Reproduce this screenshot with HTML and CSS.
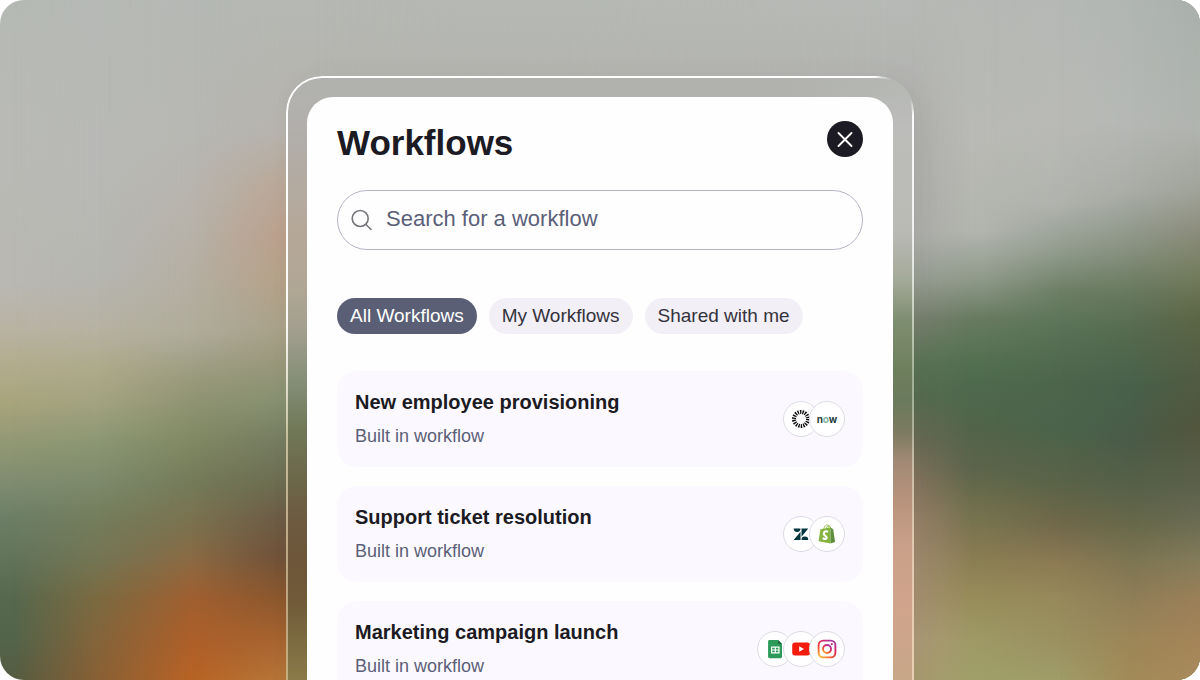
FILE: index.html
```html
<!DOCTYPE html>
<html lang="en">
<head>
<meta charset="utf-8">
<meta name="viewport" content="width=device-width, initial-scale=1">
<title>Workflows</title>
<link rel="stylesheet" href="styles.css">
</head>
<body>
<main class="scene">
  <div class="backdrop" aria-hidden="true">
    <div class="wash wash-a"></div>
    <div class="wash wash-b"></div>
    <div class="wash wash-c"></div>
    <div class="wash wash-d"></div>
    <div class="wash wash-e"></div>
    <div class="wash wash-f"></div>
    <div class="wash wash-g"></div>
    <div class="wash wash-h"></div>
    <div class="wash wash-i"></div>
  </div>
  <section class="frame" aria-labelledby="title">
    <div class="rim" aria-hidden="true"></div>
    <div class="panel">
      <header class="panel-head">
        <h1 class="title" id="title">Workflows</h1>
        <button class="close" type="button" aria-label="Close">
          <svg viewBox="0 0 36 36" width="36" height="36" fill="none" stroke="#fff" stroke-width="1.9" stroke-linecap="round"><path d="M11.500 12l13 13M24.500 12l-13 13"/></svg>
        </button>
      </header>
      <label class="search">
        <svg viewBox="0 0 22 22" width="22" height="22" fill="none" stroke="#75757a" stroke-width="1.6" stroke-linecap="round" aria-hidden="true"><circle cx="9.200" cy="9.500" r="8"/><path d="M15 15.500l5 5"/></svg>
        <input class="search-input" type="search" placeholder="Search for a workflow" aria-label="Search for a workflow">
      </label>
      <nav class="tabs" aria-label="Workflow filters">
        <button class="tab tab-active" type="button" aria-pressed="true">All Workflows</button>
        <button class="tab" type="button" aria-pressed="false">My Workflows</button>
        <button class="tab" type="button" aria-pressed="false">Shared with me</button>
      </nav>
      <ul class="list">
        <li class="item">
          <div class="item-text">
            <h2 class="item-title">New employee provisioning</h2>
            <p class="item-note">Built in workflow</p>
          </div>
          <div class="apps">
            <span class="app"><svg viewBox="0 0 20 20" width="20" height="20"><circle cx="10" cy="10" r="7" fill="none" stroke="#111" stroke-width="4" stroke-dasharray="1.400 1.043"/></svg></span>
            <span class="app"><span class="now">n<span class="now-o">o</span>w</span></span>
          </div>
        </li>
        <li class="item">
          <div class="item-text">
            <h2 class="item-title">Support ticket resolution</h2>
            <p class="item-note">Built in workflow</p>
          </div>
          <div class="apps">
            <span class="app"><svg viewBox="0 0 20 20" width="20" height="20" fill="#03363d"><path d="M9.500 7.800V16H2.700zM9.500 4.500a3.400 3.400 0 0 1-6.800 0zM10.500 16a3.400 3.400 0 0 1 6.800 0zM10.500 12.700V4.500h6.800z"/></svg></span>
            <span class="app"><svg viewBox="0 0 20 22" width="20" height="22"><path d="M6.500 7C7 3.500 9 1.500 10.500 2s1.500 2.500 1.500 4.500M9 6.500c.5-3 2-4 3.300-3.500s1.300 1.800 1.400 3" fill="none" stroke="#95bf47" stroke-width="1"/><path d="M3.400 6.200L13.500 4.500V20.500L1.600 18.300z" fill="#86b440"/><path d="M13.500 4.500l2.700 1.700 1.900 12.800-4.600 1.500z" fill="#5e8e3e"/><path d="M11 8.800C8.900 7.600 6.800 8.700 6.800 10.700c0 2.200 2.800 2.200 2.800 4 0 1.600-2 1.700-3.900.4" fill="none" stroke="#fff" stroke-width="2.100"/></svg></span>
          </div>
        </li>
        <li class="item">
          <div class="item-text">
            <h2 class="item-title">Marketing campaign launch</h2>
            <p class="item-note">Built in workflow</p>
          </div>
          <div class="apps">
            <span class="app"><svg viewBox="0 0 20 22" width="20" height="22"><path d="M4.500 2H13l4 4v12.800q0 1.400-1.400 1.400H4.500Q3.100 20.200 3.100 18.800V3.400Q3.100 2 4.500 2z" fill="#2c9a58"/><path d="M13 2l4 4h-4z" fill="#17693a"/><path d="M6 8.500h8.600v7H6z" fill="#fff"/><path d="M7.200 9.700h2.500v1.700H7.200zM10.900 9.700h2.500v1.700h-2.500zM7.200 12.600h2.500v1.700H7.200zM10.900 12.600h2.500v1.700h-2.500z" fill="#2c9a58"/></svg></span>
            <span class="app"><svg viewBox="0 0 20 20" width="20" height="20"><rect x="1.200" y="3.500" width="18" height="13" rx="3" fill="#f61c0d"/><path d="M8.200 7.200v5.600l4.800-2.800z" fill="#fff"/></svg></span>
            <span class="app"><svg viewBox="0 0 20 20" width="20" height="20"><defs><linearGradient id="insta" x1="0.100" y1="1" x2="0.800" y2="0"><stop offset="0" stop-color="#fdbb3a"/><stop offset=".32" stop-color="#f4552f"/><stop offset=".65" stop-color="#d92a5b"/><stop offset="1" stop-color="#a535a8"/></linearGradient></defs><g fill="none" stroke="url(#insta)" stroke-width="1.900"><rect x="1.600" y="1.600" width="16.800" height="16.800" rx="4.600"/><circle cx="10" cy="10" r="4"/></g><circle cx="14.800" cy="5.200" r="1.100" fill="#c02f86"/></svg></span>
          </div>
        </li>
      </ul>
    </div>
  </section>
</main>
</body>
</html>
```
FILE: styles.css
```css
* {
  box-sizing: border-box;
}

body {
  margin: 0;
  background: #fff;
  font-family: "Liberation Sans", Arial, sans-serif;
  color: #1c1a22;
}

.scene {
  position: relative;
  height: 100vh;
  padding: 76px 24px 0;
  overflow: hidden;
  border-radius: 24px;
}

/* Backdrop: vertical colour ramps, each fading in over the one before it. */
.backdrop,
.wash {
  position: absolute;
  inset: 0;
}

.wash-a {
  background: linear-gradient(#b5b9b4 0%, #b9bab6 18%, #b9b8b3 41%, #b9b3a4 48%, #b3ad90 53%, #a8a57c 59%, #929874 65%, #7f8c70 71%, #6c7f66 76%, #62745a 82%, #56684d 88%, #52644a 94%, #555c42 100%);
}

.wash-b {
  background: linear-gradient(#b6b9b5 0%, #b8b9b6 24%, #b6b6b1 40%, #b6b2a3 48%, #aeaa8b 54%, #a3a381 59%, #8c9673 65%, #7c8a6b 71%, #747d5c 76%, #747554 82%, #7c6a40 88%, #85643a 94%, #8a6034 100%);
  mask-image: linear-gradient(to right, transparent 1%, #000 8.3%);
}

.wash-c {
  background: linear-gradient(#b5b8b4 0%, #b7b7b3 20%, #b8b4ad 29%, #b5afa3 40%, #afac9a 49%, #98997b 56%, #828a65 64%, #747a59 71%, #7d704c 78%, #8a6a44 82%, #a05f30 88%, #ad5f29 94%, #b86325 100%);
  mask-image: linear-gradient(to right, transparent 8.3%, #000 16%);
}

.wash-d {
  background: linear-gradient(#b5b8b3 0%, #b6b3ae 19%, #b9a898 27%, #bb9f8b 35%, #b5a188 41%, #a9a189 48%, #969679 54%, #869070 59%, #747b60 65%, #6c6c50 71%, #6c5b46 76%, #6f5138 82%, #8b572d 88%, #a56330 94%, #b57638 100%);
  mask-image: linear-gradient(to right, transparent 16%, #000 23.5%);
}

.wash-e {
  background: linear-gradient(#b6b9b5 0%, #b3b4b1 12%, #aeaeac 20%, #abaca8 35%, #989d93 41%, #788070 47%, #587154 54%, #586b50 59%, #6b6a54 65%, #85745f 71%, #977f69 76%, #a08a6f 82%, #a68f72 88%, #ac9878 94%, #a99a70 100%);
  mask-image: linear-gradient(to right, transparent 26%, #000 74%);
}

.wash-f {
  background: linear-gradient(#b5b8b4 0%, #b9bab5 20%, #b2b4ae 34%, #8f9a8a 41%, #677a60 47%, #537050 53%, #4d694e 57%, #51644a 63%, #5c644a 69%, #71704d 75%, #867a52 81%, #958a58 87%, #9e9965 94%, #a09f69 100%);
  mask-image: linear-gradient(to right, transparent 76%, #000 81%);
}

.wash-g {
  background: linear-gradient(#b5b8b5 0%, #b9bab6 18%, #b0b3ad 30%, #909b8c 37%, #6c7e65 43%, #577156 49%, #4c664c 56%, #4b634b 63%, #5a6347 71%, #70684a 77%, #8d7b54 83%, #96895a 88%, #9a9060 94%, #9f9c68 100%);
  mask-image: linear-gradient(to right, transparent 82%, #000 88.3%);
}

.wash-h {
  background: linear-gradient(#b1b6b2 0%, #b5b8b4 18%, #aaada7 28%, #8a9383 36%, #67795e 43%, #556a4f 49%, #48604a 57%, #4a5b48 65%, #556048 71%, #67684a 77%, #7f7652 83%, #927f59 89%, #9c8657 94%, #a28a58 100%);
  mask-image: linear-gradient(to right, transparent 88.3%, #000 94.2%);
}

.wash-i {
  background: linear-gradient(#a9b1ac 0%, #b0b3af 19%, #a0a398 28%, #8b8c7c 34%, #757d5e 40%, #5b6545 47%, #505b42 56%, #52553c 63%, #5b604a 71%, #6b6c53 77%, #867c5a 83%, #9a7f58 88%, #a48458 94%, #a98a5c 100%);
  mask-image: linear-gradient(to right, transparent 94.2%, #000 100%);
}

/* Glass frame around the panel */
.frame {
  position: relative;
  max-width: 628px;
  margin: 0 auto;
  padding: 21px 21px 0;
  border-radius: 36px 36px 0 0;
  background:
    linear-gradient(to right, #b1b2ae 80%, rgba(177, 178, 174, 0)) top / 100% 21px no-repeat,
    linear-gradient(#b4b5b1 0, #b1aeab 54px, #b5a797 164px, #b0a694 214px, #a29f8e 254px, #858f78 304px, #707858 354px, #6c6a4c 394px, #6d5a40 444px, #6d5639 484px, #705a38 524px, #7c6a40 564px, #8a7a48 604px) left / 50% 100% no-repeat,
    linear-gradient(#b5b8b4 0, #bcbcba 54px, #babab5 154px, #a4aa9a 204px, #7e8e70 244px, #6e7f5e 294px, #6a7a5c 324px, #7c7a60 356px, #a08975 384px, #b8937c 424px, #c89f88 464px, #d0a48c 524px, #c8a688 604px) right / 50% 100% no-repeat;
  box-shadow: 6px 0 24px rgba(70, 70, 60, 0.05);
}

.rim {
  position: absolute;
  inset: 0;
  pointer-events: none;
  mask-image: radial-gradient(circle at calc(100% - 12px) 12px, transparent 14px, #000 30px);
}

.rim::before {
  content: "";
  position: absolute;
  inset: 0;
  padding: 2px;
  border-radius: 36px 36px 0 0;
  background:
    linear-gradient(#fff 0, rgba(255, 255, 255, 0.95) 240px, rgba(255, 240, 205, 0.6) 360px, rgba(255, 225, 180, 0.5) 604px) left / 50% 100% no-repeat,
    linear-gradient(#fff 0, rgba(255, 255, 255, 0.8) 150px, rgba(225, 240, 220, 0.45) 300px, rgba(255, 235, 205, 0.6) 604px) right / 50% 100% no-repeat;
  mask: linear-gradient(#000 0 0) content-box exclude, linear-gradient(#000 0 0);
}

.panel {
  display: flex;
  flex-direction: column;
  padding: 24px 30px 30px;
  border-radius: 26px 26px 0 0;
  background: #fefefe;
}

.panel-head {
  display: flex;
  align-items: flex-start;
  justify-content: space-between;
}

.title {
  margin: 0;
  font-size: 35px;
  font-weight: 700;
  line-height: 44px;
}

.close {
  display: flex;
  padding: 0;
  border: 0;
  border-radius: 50%;
  background: #1c1a22;
}

.search {
  display: flex;
  align-items: center;
  gap: 13px;
  height: 60px;
  margin-top: 25px;
  padding: 0 13px;
  border: 1px solid #b5b4c8;
  border-radius: 30px;
}

.search-input {
  flex: 1;
  min-width: 0;
  padding: 0 0 2px;
  border: 0;
  outline: 0;
  background: none;
  font: inherit;
  font-size: 22px;
  color: #1c1a22;
}

.search-input::placeholder {
  color: #5b5f78;
  opacity: 1;
}

.tabs {
  display: flex;
  flex-wrap: wrap;
  gap: 12px;
  margin-top: 48px;
}

.tab {
  height: 36px;
  padding: 0 13px;
  border: 0;
  border-radius: 18px;
  background: #f2eff7;
  font: inherit;
  font-size: 19px;
  color: #35333b;
}

.tab-active {
  background: #5a5f76;
  color: #fff;
}

.list {
  display: flex;
  flex-direction: column;
  gap: 19px;
  margin: 37px 0 0;
  padding: 0;
  list-style: none;
}

.item {
  display: flex;
  align-items: center;
  justify-content: space-between;
  padding: 18px;
  border-radius: 20px;
  background: #fbf9ff;
}

.item-title {
  margin: 0;
  font-size: 20px;
  font-weight: 700;
  line-height: 26px;
}

.item-note {
  margin: 8px 0 0;
  font-size: 18px;
  line-height: 26px;
  color: #5b5f78;
}

.apps {
  display: flex;
}

.app {
  display: flex;
  align-items: center;
  justify-content: center;
  width: 36px;
  height: 36px;
  border: 1px solid #dddbe6;
  border-radius: 50%;
  background: #fff;
}

.app + .app {
  margin-left: -10px;
}

.now {
  font-family: Inter, sans-serif;
  font-size: 10px;
  font-weight: 700;
  line-height: 14px;
  color: #293e40;
}

.now-o {
  color: #81b5a1;
}
```
